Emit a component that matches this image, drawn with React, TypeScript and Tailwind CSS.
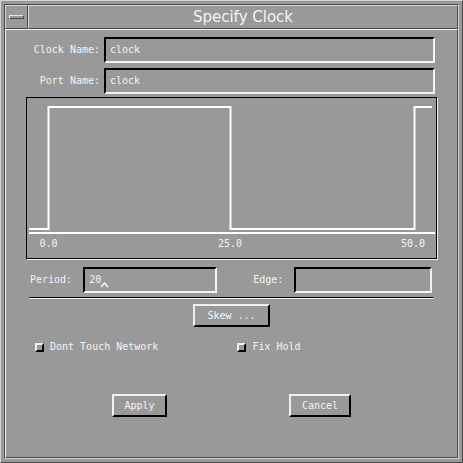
const mono = "font-['DejaVu_Sans_Mono','Liberation_Mono',monospace] text-[10px] leading-none text-[#f4f4f4]";

const Field = ({ width, value, children }: { width: string; value?: string; children?: React.ReactNode }) => (
  <div
    className={`${width} h-[26px] border-2 border-t-black border-l-black border-r-[#f4f4f4] border-b-[#f4f4f4] flex items-center pl-[4px] ${mono}`}
  >
    {value}
    {children}
  </div>
);

const Button = ({ label, width, disabled }: { label: string; width: string; disabled?: boolean }) => (
  <div
    className={`${width} h-[23px] border-2 border-t-[#f0f0f0] border-l-[#f0f0f0] border-r-black border-b-black flex items-center justify-center ${mono} ${
      disabled ? "text-[#c4c4c4]" : ""
    }`}
  >
    {label}
  </div>
);

const Check = ({ label }: { label: string }) => (
  <div className="flex items-center">
    <div className="w-[9px] h-[9px] border-2 border-t-[#f0f0f0] border-l-[#f0f0f0] border-r-black border-b-black" />
    <span className={`ml-[6px] ${mono}`}>{label}</span>
  </div>
);

export default function App() {
  return (
    <div className="w-[463px] h-[463px] bg-[#999] border border-t-[#d4d4d4] border-l-[#d4d4d4] border-r-[#4a4a4a] border-b-[#4a4a4a] p-[3px]">
      <div className="h-full border border-t-[#4a4a4a] border-l-[#4a4a4a] border-r-[#d4d4d4] border-b-[#d4d4d4] flex flex-col">
        {/* title bar */}
        <div className="h-[24px] flex shrink-0">
          <div className="w-[23px] h-full border border-t-[#d4d4d4] border-l-[#d4d4d4] border-r-[#4a4a4a] border-b-[#4a4a4a] flex items-center justify-center">
            <div className="w-[15px] h-[4px] border border-t-[#e6e6e6] border-l-[#e6e6e6] border-r-[#4a4a4a] border-b-[#4a4a4a]" />
          </div>
          <div className="flex-1 h-full border border-t-[#d4d4d4] border-l-[#d4d4d4] border-r-[#4a4a4a] border-b-[#4a4a4a] flex items-center justify-center font-['DejaVu_Sans',sans-serif] text-[15px] text-[#f4f4f4]">
            Specify Clock
          </div>
        </div>

        {/* client area */}
        <div className="flex-1 border border-t-[#f0f0f0] border-l-[#f0f0f0] border-r-[#4a4a4a] border-b-[#4a4a4a] flex flex-col">
          <div className="mt-[7px] flex items-center">
            <div className={`w-[94px] text-right ${mono}`}>Clock Name:</div>
            <div className="ml-[4px]">
              <Field width="w-[331px]" value="clock" />
            </div>
          </div>
          <div className="mt-[5px] flex items-center">
            <div className={`w-[94px] text-right ${mono}`}>Port Name:</div>
            <div className="ml-[4px]">
              <Field width="w-[331px]" value="clock" />
            </div>
          </div>

          {/* waveform */}
          <div className="mt-[3px] ml-[20px] w-[411px] h-[162px] border border-black shadow-[1px_1px_0_#f0f0f0]">
            <svg width="409" height="160" className="block">
              <polyline
                points="2,131 21.5,131 21.5,9 203.5,9 203.5,131 387.5,131 387.5,9 405,9"
                fill="none"
                stroke="#fff"
                strokeWidth="2"
                strokeLinejoin="miter"
              />
              <line x1="2" y1="135" x2="408" y2="135" stroke="#fff" strokeWidth="2" />
              <g fontFamily="DejaVu Sans Mono, monospace" fontSize="10" fill="#f4f4f4" textAnchor="middle">
                <text x="21.5" y="149">0.0</text>
                <text x="203" y="149">25.0</text>
                <text x="386" y="149">50.0</text>
              </g>
            </svg>
          </div>

          {/* period / edge */}
          <div className="mt-[8px] flex items-center">
            <div className={`ml-[24px] ${mono}`}>Period:</div>
            <div className="ml-[11px]">
              <Field width="w-[134px]" value="20">
                <svg width="9" height="6" className="relative top-[5px] -ml-[1px]">
                  <polyline points="1,5 4.5,1 8,5" fill="none" stroke="#fff" strokeWidth="1.3" />
                </svg>
              </Field>
            </div>
            <div className={`ml-[36px] ${mono}`}>Edge:</div>
            <div className="ml-[11px]">
              <Field width="w-[138px]" />
            </div>
          </div>

          <div className="mt-[4px] ml-[23px] w-[404px] border-t border-t-black border-b border-b-[#f0f0f0]" />

          <div className="mt-[5px] ml-[187px]">
            <Button label="Skew ..." width="w-[77px]" disabled />
          </div>

          <div className="mt-[15px] ml-[29px] flex items-center">
            <Check label="Dont Touch Network" />
            <div className="ml-[79px]">
              <Check label="Fix Hold" />
            </div>
          </div>

          <div className="mt-[42px] flex">
            <div className="ml-[106px]">
              <Button label="Apply" width="w-[55px]" />
            </div>
            <div className="ml-[122px]">
              <Button label="Cancel" width="w-[62px]" />
            </div>
          </div>
        </div>
      </div>
    </div>
  );
}
